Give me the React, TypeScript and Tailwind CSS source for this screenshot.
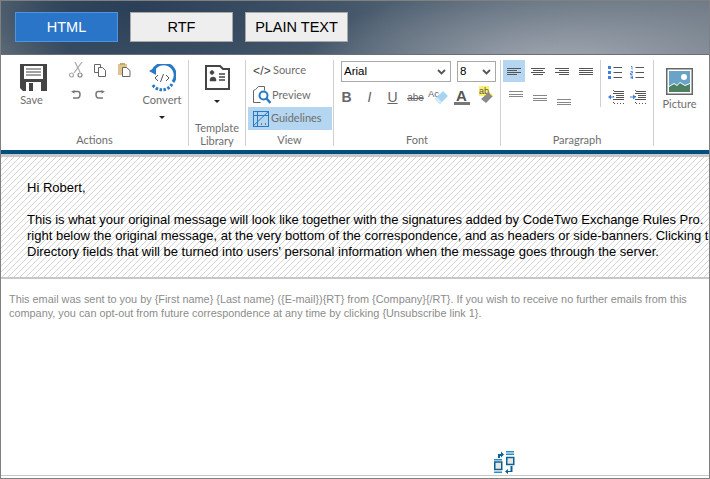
import React from "react";

function Divider() {
  return <div className="w-px bg-[#d0d0d0] h-[86px] shrink-0" />;
}

function Caret({ className = "" }: { className?: string }) {
  return <div className={`w-0 h-0 border-x-[3px] border-x-transparent border-t-[3px] border-t-[#222] ${className}`} />;
}

function Group({ label, width, children, labelClass = "leading-[14px]" }: { label: React.ReactNode; width: string; children: React.ReactNode; labelClass?: string }) {
  return (
    <div className={`flex flex-col h-[87px] shrink-0 ${width}`}>
      <div className="flex-1 min-h-0">{children}</div>
      <div className={`text-center text-[#6e6e6e] ${labelClass}`}>{label}</div>
    </div>
  );
}

function SaveIcon() {
  return (
    <svg width="27" height="27" viewBox="0 0 27 27">
      <path d="M0 0h27v27H21v-9H6v9H3L0 24z" fill="#444" />
      <rect x="4" y="2" width="19" height="13" fill="#fff" />
      <path d="M6 5h15M6 8h15M6 11h15" stroke="#444" strokeWidth="1" />
      <rect x="6" y="18" width="15" height="9" fill="#fff" />
      <rect x="9" y="19" width="4" height="8" fill="#444" />
    </svg>
  );
}

function ConvertIcon() {
  return (
    <svg width="28" height="28" viewBox="0 0 28 28" fill="none">
      <path d="M5 7A11.500 11.500 0 1 1 25 18" stroke="#2a79c4" strokeWidth="3" />
      <path d="M1 7l7-4v8z" fill="#2a79c4" />
      <path d="M24 20A11.500 11.500 0 0 1 4 20" stroke="#2a79c4" strokeWidth="3" strokeDasharray="2.500 1.500" />
      <path d="M10 11l-3 3 3 3M18 11l3 3-3 3M15.500 10l-3 8" stroke="#555" strokeWidth="1" />
    </svg>
  );
}

function ScissorsIcon() {
  return (
    <svg width="14" height="16" viewBox="0 0 14 16" fill="none" stroke="#aaa" strokeWidth="1.200">
      <path d="M13 0L5 11M6 0l5 10" />
      <circle cx="2.500" cy="13" r="2" />
      <circle cx="11" cy="13" r="2" stroke="#888" />
    </svg>
  );
}

function CopyIcon() {
  return (
    <svg width="13" height="13" viewBox="0 0 13 13" fill="#fff" stroke="#666" strokeWidth="1">
      <path d="M.5.5h6v8h-6z" />
      <path d="M4.500 3.500h4l3 3v6h-7z" />
    </svg>
  );
}

function PasteIcon() {
  return (
    <svg width="13" height="14" viewBox="0 0 13 14">
      <rect x="0" y="1" width="9" height="11" fill="#e0c48c" />
      <rect x="2" y="0" width="5" height="2" fill="#c8a868" />
      <path d="M4.500 4.500h4l3.500 3v6h-7.500z" fill="#fff" stroke="#666" />
    </svg>
  );
}

function ArrowIcon({ flip = false }: { flip?: boolean }) {
  return (
    <svg width="10" height="9" viewBox="0 0 10 9" fill="none" className={flip ? "-scale-x-100" : ""}>
      <path d="M3 1.500H7Q9 1.500 9 4.500T7 8H2" stroke="#777" strokeWidth="1.500" />
      <path d="M3.500 0v3.500L0 1.800z" fill="#777" />
    </svg>
  );
}

function TemplateIcon() {
  return (
    <svg width="25" height="25" viewBox="0 0 25 25" fill="#fff" stroke="#444" strokeWidth="2">
      <path d="M1 1h14l3 3h6v20H1z" />
      <path d="M7 9.500a2 2 0 1 1 .01 0M5 15q0-3 3-3t3 3v1H5z" fill="#444" strokeWidth="0.500" />
      <path d="M14 9h6M14 12h6M14 15h6" strokeWidth="1.300" />
    </svg>
  );
}

function PreviewIcon() {
  return (
    <svg width="18" height="18" viewBox="0 0 18 18" fill="none">
      <path d="M2.500 3.500l3-3h6v4M.5 16.500v-12l2-1M.5 16.500h7" stroke="#666" />
      <circle cx="10.500" cy="9.500" r="4" stroke="#2a79c4" strokeWidth="2" />
      <path d="M13.500 12.500l4 4.500" stroke="#2a79c4" strokeWidth="2.500" />
    </svg>
  );
}

function GuidelinesIcon() {
  return (
    <svg width="16" height="16" viewBox="0 0 16 16" fill="none" stroke="#2a79c4">
      <rect x=".5" y=".5" width="15" height="15" />
      <path d="M4.500 0v16M0 4.500h16M0 15L15 1" />
      <path d="M9 12l-1 1 1 1M12 12l1 1-1 1" stroke="#555" strokeWidth=".7" />
    </svg>
  );
}

function Lines({ widths, align }: { widths: number[]; align: "start" | "center" | "end" }) {
  const cls = align === "start" ? "items-start" : align === "center" ? "items-center" : "items-end";
  return (
    <div className={`flex flex-col gap-[1px] ${cls}`}>
      {widths.map((w, i) => (
        <div key={i} className="h-px bg-[#555]" style={{ width: w }} />
      ))}
    </div>
  );
}

function BulletIcon() {
  return (
    <svg width="14" height="13" viewBox="0 0 14 13">
      <path d="M0 0h3v3H0zM0 5h3v3H0zM0 10h3v3H0z" fill="#3f7fe0" />
      <path d="M5.500 1.500H14M5.500 6.500H14M5.500 11.500H14" stroke="#555" />
    </svg>
  );
}

function NumberIcon() {
  return (
    <svg width="14" height="13" viewBox="0 0 14 13">
      <path d="M1 .5h1v3M.5 5.500h2v1.500h-2v1.500h2M.5 10h2v3h-2M.5 11.500h2" stroke="#3f7fe0" fill="none" strokeWidth=".9" />
      <path d="M5.500 1.500H14M5.500 6.500H14M5.500 11.500H14" stroke="#555" />
    </svg>
  );
}

function IndentIcon({ right = false }: { right?: boolean }) {
  return (
    <svg width="16" height="15" viewBox="0 0 16 15">
      <path d="M6 1.500h10M6 3.500h10M8 5.500h8M8 7.500h8M6 9.500h10" stroke="#555" />
      <path d="M6 13.500h10" stroke="#555" strokeDasharray="1 2" />
      <path d="M5.500 0v15" stroke="#555" strokeDasharray="1 2" />
      {right ? (
        <path d="M0 6.500h3v-2l3 2.500-3 2.500v-2H0z" fill="#3f7fe0" />
      ) : (
        <path d="M6 6.500H3v-2L0 7l3 2.500v-2h3z" fill="#3f7fe0" />
      )}
    </svg>
  );
}

function PictureIcon() {
  return (
    <svg width="27" height="27" viewBox="0 0 27 27">
      <rect x=".75" y=".75" width="25.500" height="25.500" fill="#fff" stroke="#666" strokeWidth="1.500" />
      <rect x="3" y="3" width="21" height="21" fill="#6aa3c8" />
      <circle cx="18" cy="9" r="3" fill="#fff" />
      <path d="M3 18l5-3 3 2 3-3 5 3 5-2v9H3z" fill="#fff" />
      <path d="M3 19l5-3 3 2 3-3 5 3 5-2v8H3z" fill="#4d7f62" />
    </svg>
  );
}

function EraserIcon() {
  return (
    <svg width="14" height="14" viewBox="0 0 14 14">
      <path d="M9 0l5 5-8 8-5-5z" fill="#a6d4f2" />
      <path d="M3 6l5 5-2 2-5-5z" fill="#d3eafa" />
    </svg>
  );
}

function MarkerIcon() {
  return (
    <svg width="13" height="12" viewBox="0 0 13 12">
      <path d="M9 0l4 4-7 7-5-4z" fill="#8a8a8a" />
      <path d="M10 1l3 3" stroke="#fff16a" strokeWidth="1.500" />
    </svg>
  );
}

function Select({ value, width }: { value: string; width: string }) {
  return (
    <div className={`h-[21px] border border-[#a8a8a8] bg-white flex items-center justify-between pl-[2px] pr-[4px] ${width}`}>
      <span className="text-[11.500px] text-black font-['Liberation_Sans',sans-serif] leading-none">{value}</span>
      <svg width="9" height="6" viewBox="0 0 9 6" fill="none">
        <path d="M1 1l3.500 3.500L8 1" stroke="#555" strokeWidth="1.800" />
      </svg>
    </div>
  );
}

function SwapIcon() {
  return (
    <svg width="21" height="23" viewBox="0 0 21 23">
      <path d="M12 .75h8M12 3.250h8" stroke="#2a8cc4" strokeWidth="1.500" fill="none" />
      <rect x="12.750" y="6.500" width="7" height="7" fill="#e6e6e6" stroke="#0f5f92" strokeWidth="1.500" />
      <path d="M0 8.750h8M0 21.250h8" stroke="#2a8cc4" strokeWidth="1.500" fill="none" />
      <rect x=".75" y="11" width="7" height="7.500" fill="#e6e6e6" stroke="#0f5f92" strokeWidth="1.500" />
      <path d="M4 7V3H7V.5l3 3-3 3V5H6v2z" fill="#0f5f92" />
      <path d="M16.500 15v5H14v-2l-3 2.500 3 2.500v-2h4.500v-6z" fill="#0f5f92" />
    </svg>
  );
}

const ALIGN_ICONS: [number[], "start" | "center" | "end"][] = [
  [[14, 10, 14, 10], "start"],
  [[14, 10, 14, 10], "center"],
  [[14, 10, 14, 10], "end"],
  [[14, 14, 14, 14], "center"],
];

function ThinLines() {
  return (
    <div className="w-[14px] flex flex-col gap-[1.500px] opacity-70">
      <div className="h-px bg-[#555]" />
      <div className="h-px bg-[#555]" />
      <div className="h-px bg-[#555]" />
    </div>
  );
}

export default function App() {
  return (
    <div className="w-[710px] h-[479px] bg-white border border-[#808080] flex flex-col overflow-hidden font-['Lato',sans-serif] text-[11px]">
      <div className="h-[54px] shrink-0 flex items-start gap-3 pl-[14px] pt-[11px] border-b border-[#6b7078] bg-[radial-gradient(ellipse_260px_90px_at_560px_70px,#a8adb6,transparent),radial-gradient(ellipse_260px_90px_at_130px_5px,#2b4058,transparent),linear-gradient(90deg,#6f7a82,#3f5266_10%,#4a5c6e_50%,#6d7985_100%)] font-['Liberation_Sans',sans-serif] text-[14.500px]">
        <div className="w-[103px] h-[30px] flex items-center justify-center pt-[2px] bg-[#2a75c7] border border-[#4a96e6] text-white">HTML</div>
        <div className="w-[103px] h-[30px] flex items-center justify-center pt-[2px] bg-[#eeeeee] border border-[#a8a8a8] text-black">RTF</div>
        <div className="w-[103px] h-[30px] flex items-center justify-center pt-[2px] bg-[#eeeeee] border border-[#a8a8a8] text-black">PLAIN TEXT</div>
      </div>

      <div className="h-[95px] shrink-0 flex items-start pt-[5px] text-[#6e6e6e]">
        <Group label="Actions" width="w-[187px]">
          <div className="flex pt-[2px]">
            <div className="w-[63px] flex flex-col items-center pt-[2px] pl-[2px]">
              <SaveIcon />
              <span className="leading-[15px] mt-[1px] -ml-[4px]">Save</span>
            </div>
            <div className="w-[72px] grid grid-cols-[24px_24px_24px] items-center justify-items-center content-start">
              <ScissorsIcon />
              <CopyIcon />
              <PasteIcon />
              <div className="mt-[12px]"><ArrowIcon /></div>
              <div className="mt-[12px]"><ArrowIcon flip /></div>
            </div>
            <div className="w-[52px] flex flex-col items-center pt-[2px]">
              <ConvertIcon />
              <span className="leading-[15px]">Convert</span>
              <Caret className="mt-[9px]" />
            </div>
          </div>
        </Group>
        <Divider />
        <Group label={<>Template<br />Library</>} width="w-[56px]" labelClass="leading-[13px]">
          <div className="flex flex-col items-center pt-[5px]">
            <TemplateIcon />
            <Caret className="mt-[10px]" />
          </div>
        </Group>
        <Divider />
        <Group label="View" width="w-[87px]">
          <div className="flex flex-col pl-[2px] -mt-[2px]">
            <div className="h-[25px] flex items-center gap-[2px] pl-[5px]">
              <span className="text-[#444] font-['Liberation_Sans',sans-serif] text-[12px] tracking-[0.2px]">&lt;/&gt;</span>
              <span>Source</span>
            </div>
            <div className="h-[24px] flex items-center gap-[1px] pl-[5px]">
              <PreviewIcon />
              <span>Preview</span>
            </div>
            <div className="h-[23px] w-[84px] flex items-center gap-[2px] pl-[5px] bg-[#b5d6f0]">
              <GuidelinesIcon />
              <span>Guidelines</span>
            </div>
          </div>
        </Group>
        <Divider />
        <Group label="Font" width="w-[166px]">
          <div className="flex flex-col pl-[7px] pt-[1px]">
            <div className="flex gap-[6px]">
              <Select value="Arial" width="w-[110px]" />
              <Select value="8" width="w-[39px]" />
            </div>
            <div className="flex items-center -ml-[6px] mt-[6px] h-[18px] text-[#666] font-['Liberation_Sans',sans-serif]">
              <span className="w-[23px] text-center font-bold text-[14px]">B</span>
              <span className="w-[23px] text-center italic text-[14px]">I</span>
              <span className="w-[23px] text-center underline text-[14px]">U</span>
              <span className="w-[23px] text-center line-through text-[10px]">abe</span>
              <span className="relative w-[23px] h-[18px] pl-[1px] text-[9.500px] leading-[12px]">
                Ac
                <span className="absolute left-[7px] top-[3px]"><EraserIcon /></span>
              </span>
              <span className="w-[23px] flex flex-col items-center">
                <span className="font-bold text-[15px] leading-[13px] text-[#555]">A</span>
                <span className="w-[16px] h-[3px] bg-[#777]" />
              </span>
              <span className="relative w-[23px] h-[18px] pl-[6px] text-[9px] leading-[9px] -mt-[3px] text-[#555]">
                <span className="bg-[#fff06a]">ab</span>
                <span className="absolute left-[7px] top-[5px]"><MarkerIcon /></span>
              </span>
            </div>
          </div>
        </Group>
        <Divider />
        <Group label="Paragraph" width="w-[152px]">
          <div className="flex">
            <div className="w-[99px] pl-[2px] h-[71px]">
              <div className="flex">
                {ALIGN_ICONS.map(([w, a], i) => (
                  <div key={i} className={`w-[22px] h-[22px] mr-[2px] flex items-center justify-center ${i === 0 ? "bg-[#b5d6f0]" : ""}`}>
                    <div className="w-[14px]"><Lines widths={w} align={a} /></div>
                  </div>
                ))}
              </div>
              <div className="flex mt-[9px] pl-[1px]">
                <div className="w-[24px] flex justify-center"><ThinLines /></div>
                <div className="w-[24px] flex justify-center pt-[4px]"><ThinLines /></div>
                <div className="w-[24px] flex justify-center pt-[8px]"><ThinLines /></div>
              </div>
            </div>
            <div className="w-px h-[47px] bg-[#d0d0d0]" />
            <div className="flex-1 grid grid-cols-[22px_22px] pl-[7px] pt-[6px] gap-y-[11px] content-start justify-items-start">
              <BulletIcon />
              <NumberIcon />
              <IndentIcon />
              <IndentIcon right />
            </div>
          </div>
        </Group>
        <Divider />
        <div className="flex flex-col items-center w-[50px] pl-[1px] pt-[8px] gap-[1px]">
          <PictureIcon />
          <span className="leading-[16px]">Picture</span>
        </div>
      </div>

      <div className="h-[4px] shrink-0 bg-[#00507f]" />
      <div className="h-[125px] shrink-0 border-t-[3px] border-b-[2px] border-y-[#c8c8c8] bg-[repeating-linear-gradient(135deg,#d4d4d4_0,#d4d4d4_1px,#ffffff_1px,#ffffff_4.243px)] pl-[26px] pt-[23px] font-['Liberation_Sans',sans-serif] text-[13px] leading-4 text-black whitespace-nowrap overflow-hidden">
        <p>Hi Robert,</p>
        <p className="mt-4">This is what your original message will look like together with the signatures added by CodeTwo Exchange Rules Pro.</p>
        <p>right below the original message, at the very bottom of the correspondence, and as headers or side-banners. Clicking t</p>
        <p>Directory fields that will be turned into users' personal information when the message goes through the server.</p>
      </div>

      <div className="flex-1 relative pl-[8px] pt-[13px] font-['Liberation_Sans',sans-serif] text-[10.880px] leading-[14px] text-[#8c8c8c]">
        <p>This email was sent to you by {"{First name} {Last name} ({E-mail}){RT}"} from {"{Company}{/RT}"}. If you wish to receive no further emails from this</p>
        <p>company, you can opt-out from future correspondence at any time by clicking {"{Unsubscribe link 1}"}.</p>
        <div className="absolute left-[493px] top-[172px]"><SwapIcon /></div>
      </div>
      <div className="h-[3px] shrink-0 bg-white border-t border-[#c8c8c8]" />
    </div>
  );
}
